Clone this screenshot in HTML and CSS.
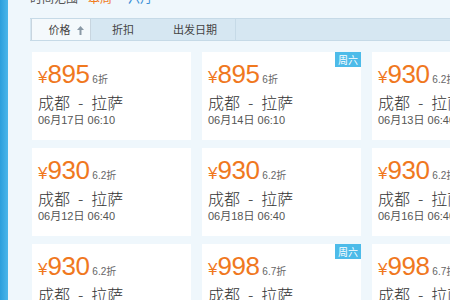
FILE: index.html
```html
<!DOCTYPE html>
<html lang="zh">
<head>
<meta charset="utf-8">
<link rel="stylesheet" href="styles.css">
</head>
<body>
<div class="side"></div>
<div class="main">
  <div class="filter">
    <span class="label">时间范围</span>
    <span class="opt on">本周</span>
    <span class="opt">六月</span>
  </div>
  <div class="tabs">
    <div class="tab active">价格
      <svg class="arrow" width="7" height="9" viewBox="0 0 7 9"><path d="M3.5 0 L7 4 H4.5 V9 H2.5 V4 H0 Z" fill="#8a99a6"/></svg>
    </div>
    <div class="tab t2">折扣</div>
    <div class="tab t3">出发日期</div>
  </div>
  <div class="grid">
    <div class="card"><div class="price"><span class="yen">¥</span><span class="num">895</span><span class="disc">6折</span></div><div class="route">成都<span class="dash">-</span>拉萨</div><div class="date">06月17日 06:10</div></div>
    <div class="card"><span class="badge">周六</span><div class="price"><span class="yen">¥</span><span class="num">895</span><span class="disc">6折</span></div><div class="route">成都<span class="dash">-</span>拉萨</div><div class="date">06月14日 06:10</div></div>
    <div class="card"><div class="price"><span class="yen">¥</span><span class="num">930</span><span class="disc">6.2折</span></div><div class="route">成都<span class="dash">-</span>拉萨</div><div class="date">06月13日 06:40</div></div>

    <div class="card"><div class="price"><span class="yen">¥</span><span class="num">930</span><span class="disc">6.2折</span></div><div class="route">成都<span class="dash">-</span>拉萨</div><div class="date">06月12日 06:40</div></div>
    <div class="card"><div class="price"><span class="yen">¥</span><span class="num">930</span><span class="disc">6.2折</span></div><div class="route">成都<span class="dash">-</span>拉萨</div><div class="date">06月18日 06:40</div></div>
    <div class="card"><div class="price"><span class="yen">¥</span><span class="num">930</span><span class="disc">6.2折</span></div><div class="route">成都<span class="dash">-</span>拉萨</div><div class="date">06月16日 06:40</div></div>

    <div class="card"><div class="price"><span class="yen">¥</span><span class="num">930</span><span class="disc">6.2折</span></div><div class="route">成都<span class="dash">-</span>拉萨</div><div class="date">06月11日 06:40</div></div>
    <div class="card"><span class="badge">周六</span><div class="price"><span class="yen">¥</span><span class="num">998</span><span class="disc">6.7折</span></div><div class="route">成都<span class="dash">-</span>拉萨</div><div class="date">06月21日 06:40</div></div>
    <div class="card"><div class="price"><span class="yen">¥</span><span class="num">998</span><span class="disc">6.7折</span></div><div class="route">成都<span class="dash">-</span>拉萨</div><div class="date">06月20日 06:40</div></div>
  </div>
</div>
</body>
</html>
```
FILE: styles.css
```css
html, body {
  margin: 0;
  padding: 0;
  width: 450px;
  height: 300px;
  overflow: hidden;
  background: #eff7fc;
  font-family: "Liberation Sans", "Noto Sans CJK SC", sans-serif;
}
body {
  display: flex;
}
.side {
  width: 8px;
  flex: none;
  background: linear-gradient(to right, #2c9fdc, #4cb6ea);
}
.main {
  flex: 1;
  padding-left: 22px;
  overflow: hidden;
}
.filter {
  height: 12px;
  margin-top: -7px;
  font-size: 12px;
  line-height: 12px;
  color: #555;
  display: flex;
  white-space: nowrap;
}
.filter .label { width: 58px; }
.filter .opt { width: 40px; color: #3a8fd6; }
.filter .opt.on { color: #f07a1e; }
.tabs {
  margin-top: 13px;
  height: 21px;
  display: flex;
  background: #d6e7f2;
  border-top: 1px solid #c6dae7;
  border-bottom: 1px solid #c6dae7;
  font-size: 11px;
  color: #444;
  font-family: "Noto Sans CJK SC", sans-serif;
}
.tab {
  display: flex;
  align-items: center;
  justify-content: center;
  line-height: 21px;
}
.tab.active {
  width: 60px;
  box-sizing: border-box;
  padding-left: 10px;
  margin-left: 1px;
  background: #f4f9fc;
  border-left: 1px solid #c8d5df;
  border-right: 1px solid #c8d5df;
  gap: 6px;
}
.arrow { margin-top: 1px; }
.t2 { width: 64px; }
.t3 { width: 80px; border-right: 1px solid #c6dae7; }
.grid {
  margin-top: 11px;
  display: grid;
  grid-template-columns: repeat(3, 159px);
  grid-auto-rows: 88px;
  gap: 8px 11px;
  margin-left: 2px;
}
.card {
  position: relative;
  background: #fff;
  padding: 0 6px;
}
.badge {
  position: absolute;
  top: 0;
  right: 0;
  width: 26px;
  height: 15px;
  background: #4dbbe9;
  color: #fff;
  font-size: 10px;
  line-height: 15px;
  text-align: center;
  font-family: "Noto Sans CJK SC", sans-serif;
}
.price {
  margin-top: 9px;
  height: 26px;
  display: flex;
  align-items: baseline;
  color: #f0781e;
  line-height: 26px;
  white-space: nowrap;
}
.yen { font-size: 17px; }
.num { font-size: 26px; letter-spacing: -0.5px; }
.disc {
  font-size: 10px;
  color: #666;
  margin-left: 3px;
}
.route {
  margin-top: 5px;
  height: 20px;
  line-height: 20px;
  font-size: 16px;
  font-weight: 300;
  color: #333;
  font-family: "Noto Sans CJK SC", sans-serif;
  white-space: nowrap;
}
.dash { margin: 0 8px; }
.date {
  height: 16px;
  line-height: 16px;
  font-size: 11px;
  color: #555;
  white-space: nowrap;
}
```
